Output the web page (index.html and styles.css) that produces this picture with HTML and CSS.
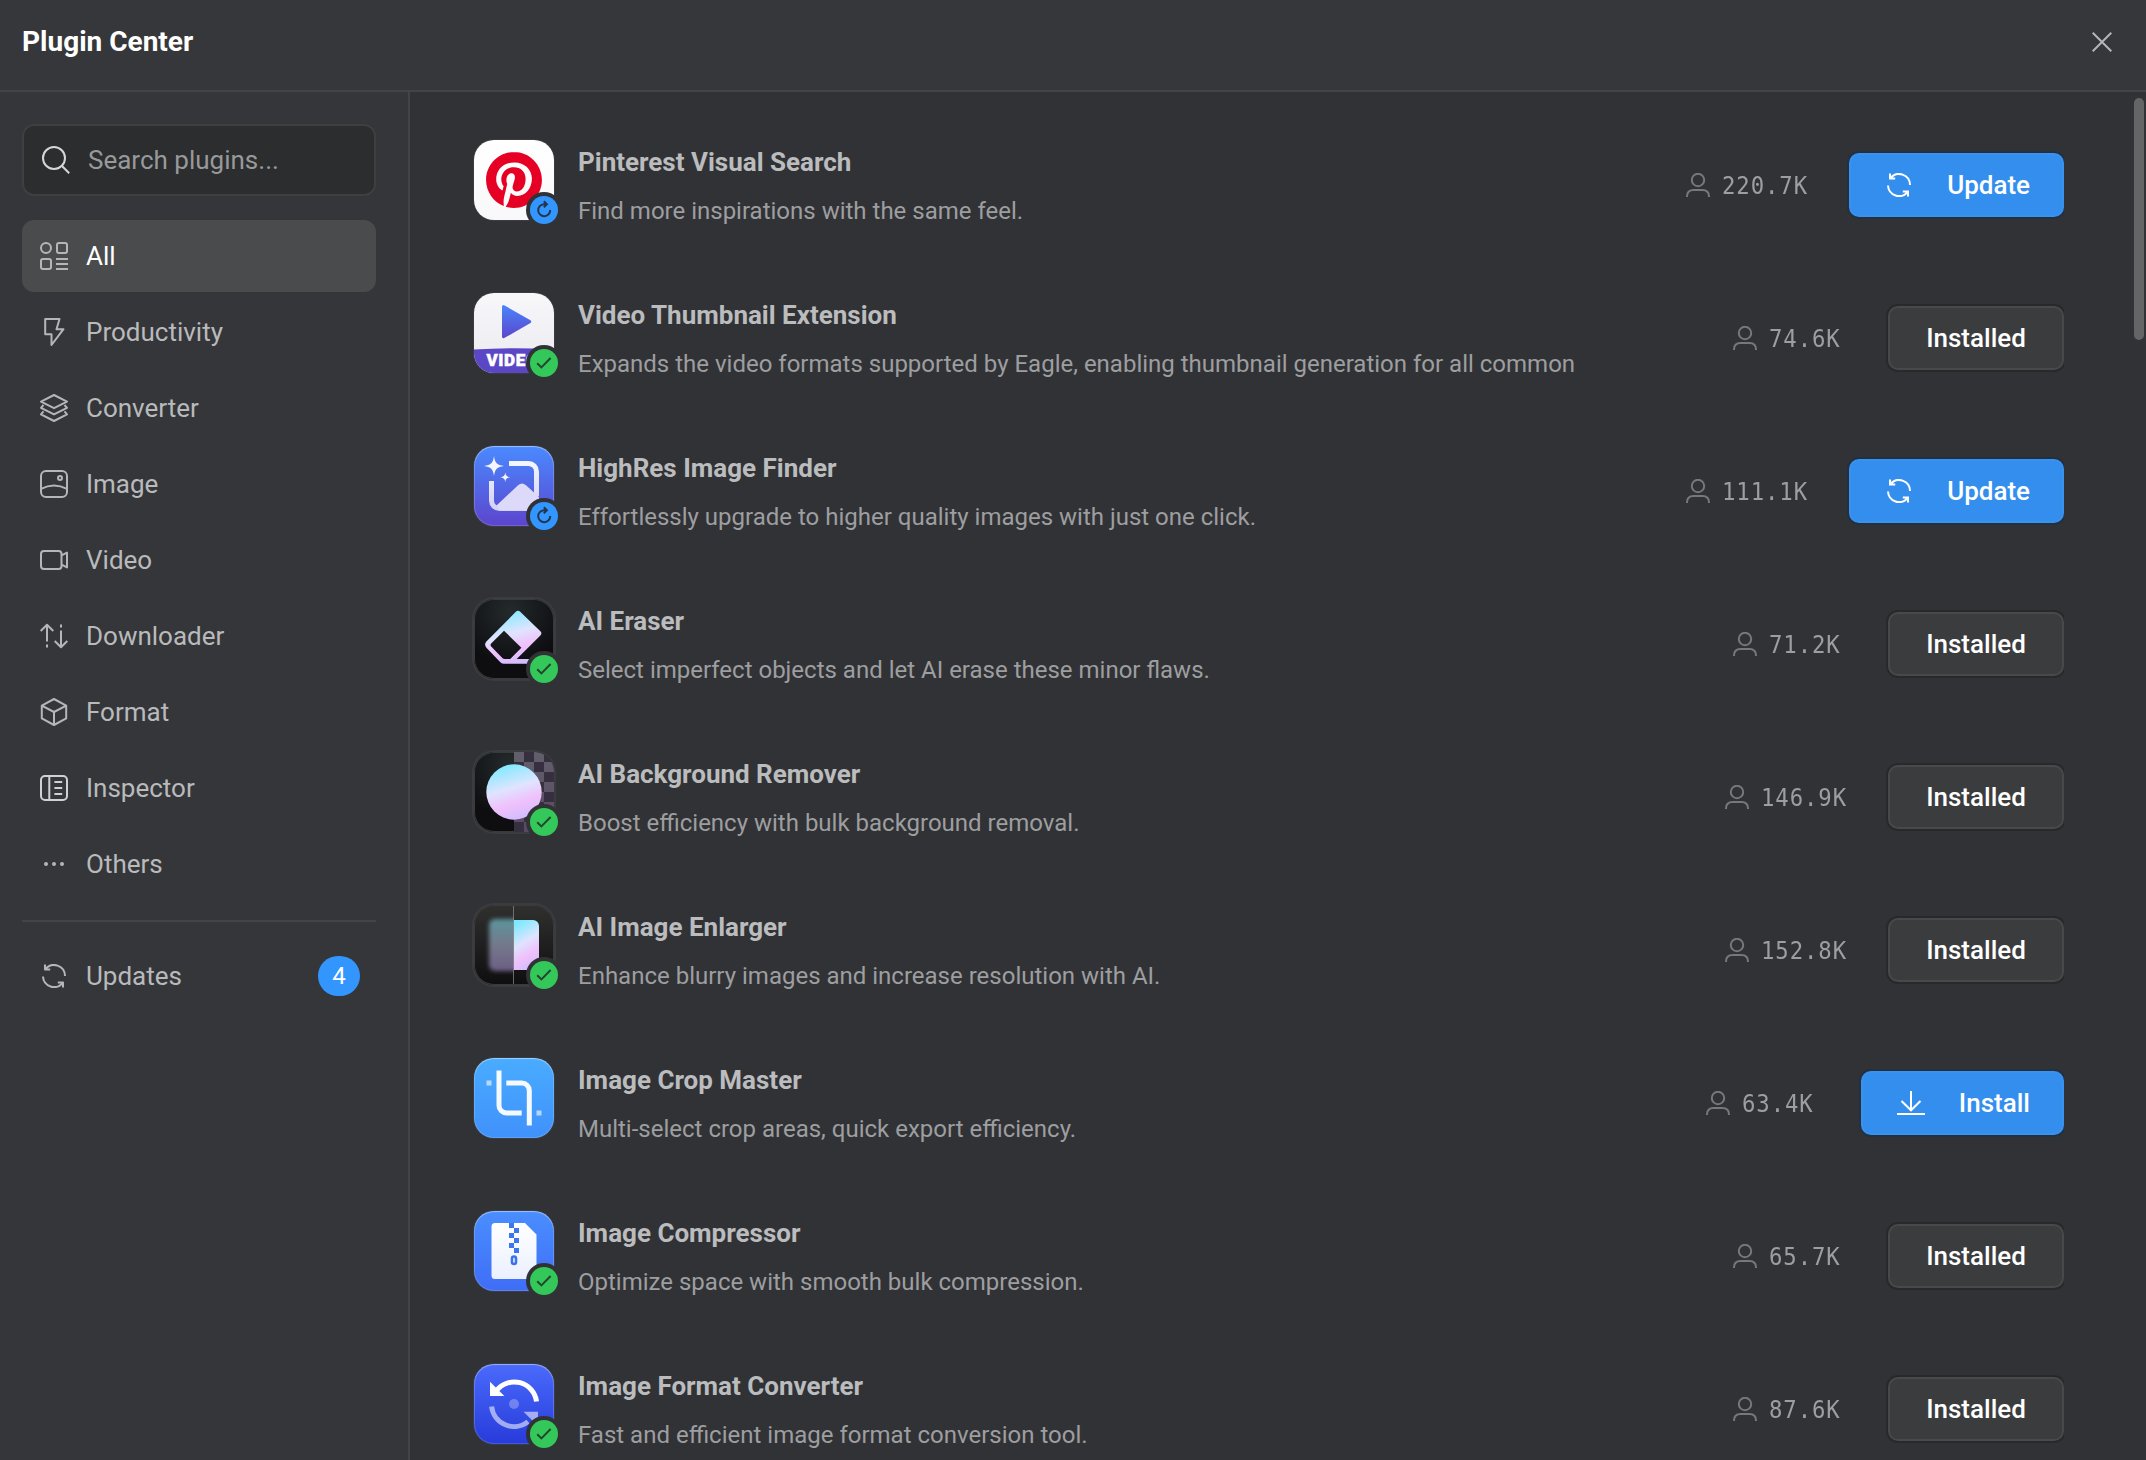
FILE: index.html
```html
<!DOCTYPE html>
<html lang="en">
<head>
<meta charset="utf-8">
<title>Plugin Center</title>
<link rel="stylesheet" href="styles.css">
</head>
<body>
<svg class="defs" aria-hidden="true">
  <defs>
    <linearGradient id="g-play" x1="0" y1="0" x2="0" y2="1"><stop offset="0" stop-color="#4a86fa"/><stop offset="1" stop-color="#5b45cc"/></linearGradient>
    <linearGradient id="g-frame" x1="0" y1="0" x2="0" y2="1"><stop offset="0" stop-color="#f3f5ff"/><stop offset="1" stop-color="#d3d1f5"/></linearGradient>
    <linearGradient id="g-holo" x1=".35" y1="0" x2=".65" y2="1"><stop offset="0" stop-color="#7eeaff"/><stop offset=".42" stop-color="#dfe4ff"/><stop offset=".7" stop-color="#f0c0fb"/><stop offset="1" stop-color="#cfbcff"/></linearGradient>
    <linearGradient id="g-blur" x1="0" y1="0" x2="0" y2="1"><stop offset="0" stop-color="#5c959d"/><stop offset=".5" stop-color="#74798a"/><stop offset="1" stop-color="#6d5f86"/></linearGradient>
    <linearGradient id="g-white" x1="0" y1="0" x2="0" y2="1"><stop offset="0" stop-color="#ffffff"/><stop offset="1" stop-color="#eaf0ff"/></linearGradient>
    <linearGradient id="g-check" x1="0" y1="0" x2="0" y2="1"><stop offset="0" stop-color="#625f6c"/><stop offset="1" stop-color="#5a4862"/></linearGradient>
    <filter id="f-soft" x="-30%" y="-30%" width="160%" height="160%"><feGaussianBlur stdDeviation="2.2"/></filter>
    <clipPath id="c-left"><path d="M0 0H40V80H0z"/></clipPath>
    <symbol id="i-sync" viewBox="0 0 24 24"><path d="M3.4 5.2A11 11 0 0 1 23 12M1 12.5A11 11 0 0 0 20.6 18.8M3 .4V5.6H8.2M21 23.6V18.4H15.8"/></symbol>
    <symbol id="i-user" viewBox="0 0 24 24"><circle cx="12" cy="7" r="6.2"/><path d="M1 24V23.5C1 19.5 3.5 17 7.5 17H16.5C20.5 17 23 19.5 23 23.5V24"/></symbol>
    <symbol id="i-download" viewBox="0 0 28 24"><path d="M14 0V18.5M4.5 10L14 19.3 23.5 10M0 23H28"/></symbol>
    <symbol id="i-check" viewBox="0 0 28 28"><path d="M7.2 14.2L11.4 18.4 20.6 9"/></symbol>
    <symbol id="i-reload" viewBox="0 0 28 28"><path d="M16 8.2H13.9A6 6 0 1 0 20.2 14M13.8 5.2L16.9 8.2 13.8 11.2"/></symbol>
  </defs>
</svg>

<header class="topbar">
  <h1 class="topbar-title">Plugin Center</h1>
  <svg class="close" viewBox="0 0 20 20"><path d="M.7 .7L19.3 19.3M19.3 .7L.7 19.3"/></svg>
</header>

<div class="body">
  <aside class="sidebar">
    <div class="search">
      <svg class="search-icon" viewBox="0 0 28 28"><circle cx="12" cy="12" r="11"/><path d="M20 20L27.2 27.2"/></svg>
      <span>Search plugins...</span>
    </div>
    <nav class="nav">
      <a class="nav-item active"><svg class="ic" viewBox="0 0 28 28"><circle cx="6" cy="6" r="5"/><rect x="17" y="1" width="10" height="10" rx="2"/><rect x="1" y="17" width="10" height="10" rx="2"/><path d="M16 17H28M16 22H28M16 27H28"/></svg><span>All</span></a>
      <a class="nav-item"><svg class="ic" viewBox="0 0 28 28"><path d="M5.5 1H19.5L16.5 11.2H23.5L11.5 27V16.3H5.2V1z"/></svg><span>Productivity</span></a>
      <a class="nav-item"><svg class="ic" viewBox="0 0 28 28"><path d="M14 1L27 7.6 14 14.2 1 7.6zM3.5 11L1 13.8 14 20.4 27 13.8 24.5 11M3.5 17.4L1 20.4 14 27 27 20.4 24.5 17.4"/></svg><span>Converter</span></a>
      <a class="nav-item"><svg class="ic" viewBox="0 0 28 28"><rect x="1" y="1" width="26" height="26" rx="5"/><circle cx="20" cy="8" r="2"/><path d="M1 18.8Q14 12 27 18.8"/></svg><span>Image</span></a>
      <a class="nav-item"><svg class="ic" viewBox="0 0 28 28"><rect x="1" y="5" width="20.5" height="18" rx="3"/><path d="M21.5 9.4L27 6.6V21.4L21.5 18.6"/></svg><span>Video</span></a>
      <a class="nav-item"><svg class="ic" viewBox="0 0 28 28"><path d="M7 3V19.5M7 22.5V25.5M.7 9L7 2.8 13.3 9M21 2.5V5.5M21 8.5V25M14.7 19L21 25.2 27.3 19"/></svg><span>Downloader</span></a>
      <a class="nav-item"><svg class="ic" viewBox="0 0 28 28"><path d="M14 1L26.2 7.6V20.4L14 27 1.8 20.4V7.6zM1.8 7.6L14 14 26.2 7.6M14 14V27"/></svg><span>Format</span></a>
      <a class="nav-item"><svg class="ic bright" viewBox="0 0 28 28"><rect x="1" y="2" width="26" height="24" rx="4"/><path d="M9.3 2V26M14.4 8H22.2M14.4 14H22.2M14.4 20H22.2"/></svg><span>Inspector</span></a>
      <a class="nav-item"><svg class="ic dots" viewBox="0 0 28 28"><circle cx="6" cy="14" r="2"/><circle cx="14" cy="14" r="2"/><circle cx="22" cy="14" r="2"/></svg><span>Others</span></a>
    </nav>
    <div class="updates">
      <a class="nav-item"><svg class="ic sync"><use href="#i-sync"/></svg><span>Updates</span><b class="count">4</b></a>
    </div>
  </aside>

  <main class="list">
    <article class="row">
      <div class="app pinterest">
        <svg viewBox="0 0 80 80"><g transform="translate(12 12) scale(2.3333)"><path fill="#e60023" d="M12.017 0C5.396 0 .029 5.367.029 11.987c0 5.079 3.158 9.417 7.618 11.162-.105-.949-.199-2.403.041-3.439.219-.937 1.406-5.957 1.406-5.957s-.359-.72-.359-1.781c0-1.663.967-2.911 2.168-2.911 1.024 0 1.518.769 1.518 1.688 0 1.029-.653 2.567-.992 3.992-.285 1.193.6 2.165 1.775 2.165 2.128 0 3.768-2.245 3.768-5.487 0-2.861-2.063-4.869-5.008-4.869-3.41 0-5.409 2.562-5.409 5.199 0 1.033.394 2.143.889 2.741.099.12.112.225.085.345-.09.375-.293 1.199-.334 1.363-.053.225-.172.271-.401.165-1.495-.69-2.433-2.878-2.433-4.646 0-3.776 2.748-7.252 7.92-7.252 4.158 0 7.392 2.967 7.392 6.923 0 4.135-2.607 7.462-6.233 7.462-1.214 0-2.354-.629-2.758-1.379l-.749 2.848c-.269 1.045-1.004 2.352-1.498 3.146 1.123.345 2.306.535 3.55.535 6.607 0 11.985-5.365 11.985-11.987C23.97 5.39 18.592.026 11.985.026z"/></g></svg>
        <i class="badge blue"><svg><use href="#i-reload"/></svg></i>
      </div>
      <div class="info"><h2>Pinterest Visual Search</h2><p>Find more inspirations with the same feel.</p></div>
      <div class="users"><svg><use href="#i-user"/></svg><span>220.7K</span></div>
      <button class="btn primary update"><svg><use href="#i-sync"/></svg>Update</button>
    </article>

    <article class="row">
      <div class="app video">
        <svg viewBox="0 0 80 80"><path fill="#5b46c6" d="M0 56.6Q40 54 80 56.6V80H0z"/><path fill="url(#g-play)" d="M28 14Q28 11 30.7 12.5L56 27Q58.6 28.7 56 30.3L30.7 44.8Q28 46.3 28 43.3z"/><text class="video-text" x="12.5" y="72.7">VIDEO</text></svg>
        <i class="badge green"><svg><use href="#i-check"/></svg></i>
      </div>
      <div class="info"><h2>Video Thumbnail Extension</h2><p>Expands the video formats supported by Eagle, enabling thumbnail generation for all common</p></div>
      <div class="users"><svg><use href="#i-user"/></svg><span>74.6K</span></div>
      <button class="btn">Installed</button>
    </article>

    <article class="row">
      <div class="app highres">
        <svg viewBox="0 0 80 80"><path fill="#f3f5ff" d="M20 10C21 17 23 19 30 20 23 21 21 23 20 30 19 23 17 21 10 20 17 19 19 17 20 10zM31.3 26.3C31.8 29.8 32.8 30.8 36.3 31.3 32.8 31.8 31.8 32.8 31.3 36.3 30.8 32.8 29.8 31.8 26.3 31.3 29.8 30.8 30.8 29.8 31.3 26.3z"/><path fill="none" stroke="url(#g-frame)" stroke-width="5" d="M35 17.5H54.5A8 8 0 0 1 62.5 25.5V50M17.5 35V54.5A8 8 0 0 0 25.5 62.5H56"/><path fill="#dcdaf8" d="M22.5 59.5L44 39.3Q48 35.6 52 39.3L65 51V64H26z"/></svg>
        <i class="badge blue"><svg><use href="#i-reload"/></svg></i>
      </div>
      <div class="info"><h2>HighRes Image Finder</h2><p>Effortlessly upgrade to higher quality images with just one click.</p></div>
      <div class="users"><svg><use href="#i-user"/></svg><span>111.1K</span></div>
      <button class="btn primary update"><svg><use href="#i-sync"/></svg>Update</button>
    </article>

    <article class="row">
      <div class="app dark eraser">
        <svg viewBox="0 0 80 80"><path fill="url(#g-holo)" fill-rule="evenodd" d="M41.8 12.8Q44 10.8 46.2 12.8L66.4 32.3Q68.4 34.3 66.4 36.5L42.7 60H64V64.8H30Q28 64.8 26.6 63.4L12.4 48.8Q9.8 45.6 12.4 42.4zM30 31.7L17.2 44.4Q15.8 46 17.2 47.6L28.6 59.2Q29.4 60 30.6 60H36.2L47.4 48.8z"/></svg>
        <i class="badge green"><svg><use href="#i-check"/></svg></i>
      </div>
      <div class="info"><h2>AI Eraser</h2><p>Select imperfect objects and let AI erase these minor flaws.</p></div>
      <div class="users"><svg><use href="#i-user"/></svg><span>71.2K</span></div>
      <button class="btn">Installed</button>
    </article>

    <article class="row">
      <div class="app dark remover">
        <svg viewBox="0 0 80 80"><path fill="#352f40" d="M40 0H80V80H40z"/><path fill="url(#g-check)" d="M40 0h10v10h-10zM60 0h10v10h-10zM50 10h10v10h-10zM70 10h10v10h-10zM60 20h10v10h-10zM70 30h10v10h-10zM60 40h10v10h-10zM70 50h10v10h-10zM40 60h10v10h-10zM50 70h10v10h-10z"/><circle cx="40" cy="40" r="27.7" fill="url(#g-holo)"/></svg>
        <i class="badge green"><svg><use href="#i-check"/></svg></i>
      </div>
      <div class="info"><h2>AI Background Remover</h2><p>Boost efficiency with bulk background removal.</p></div>
      <div class="users"><svg><use href="#i-user"/></svg><span>146.9K</span></div>
      <button class="btn">Installed</button>
    </article>

    <article class="row">
      <div class="app dark enlarger">
        <svg viewBox="0 0 80 80"><g clip-path="url(#c-left)"><rect x="15" y="14" width="40" height="52" rx="6" fill="url(#g-blur)" filter="url(#f-soft)"/></g><path fill="url(#g-holo)" d="M40 15H59A6 6 0 0 1 65 21V59A6 6 0 0 1 59 65H40z"/><path stroke="#8d8d90" stroke-width="1" stroke-opacity=".7" d="M39.5 1V79"/></svg>
        <i class="badge green"><svg><use href="#i-check"/></svg></i>
      </div>
      <div class="info"><h2>AI Image Enlarger</h2><p>Enhance blurry images and increase resolution with AI.</p></div>
      <div class="users"><svg><use href="#i-user"/></svg><span>152.8K</span></div>
      <button class="btn">Installed</button>
    </article>

    <article class="row">
      <div class="app crop">
        <svg viewBox="0 0 80 80"><path fill="none" stroke="#fff" stroke-opacity=".95" stroke-width="5" d="M25 12.5V47.5A7.5 7.5 0 0 0 32.5 55H47.7M32.3 25H47.8A7.5 7.5 0 0 1 55.3 32.5V67.5"/><path fill="#fff" fill-opacity=".6" d="M12.5 22.5h5v5h-5zM62.5 52.5h5v5h-5z"/></svg>
      </div>
      <div class="info"><h2>Image Crop Master</h2><p>Multi-select crop areas, quick export efficiency.</p></div>
      <div class="users"><svg><use href="#i-user"/></svg><span>63.4K</span></div>
      <button class="btn primary install"><svg><use href="#i-download"/></svg>Install</button>
    </article>

    <article class="row">
      <div class="app compressor">
        <svg viewBox="0 0 80 80"><path fill="url(#g-white)" d="M21 12H51L62.5 23.5V68H21A3.5 3.5 0 0 1 17.5 64.5V15.5A3.5 3.5 0 0 1 21 12z"/><path fill="#3d77ee" d="M35 12h5v5h-5zM40 17h5v5h-5zM35 22h5v5h-5zM40 27h5v5h-5zM35 32h5v5h-5zM40 37h5v5h-5z"/><rect x="38" y="45.5" width="4" height="7.5" rx="2" fill="#fff" stroke="#3d72ee" stroke-width="2.6"/></svg>
        <i class="badge green"><svg><use href="#i-check"/></svg></i>
      </div>
      <div class="info"><h2>Image Compressor</h2><p>Optimize space with smooth bulk compression.</p></div>
      <div class="users"><svg><use href="#i-user"/></svg><span>65.7K</span></div>
      <button class="btn">Installed</button>
    </article>

    <article class="row">
      <div class="app converter">
        <svg viewBox="0 0 80 80"><path fill="none" stroke="#fff" stroke-width="5" d="M22.5 26.5A22.5 22.5 0 0 1 62.5 37.5"/><path fill="#fff" d="M16 17.7V32H30.3z"/><g opacity=".55"><path fill="none" stroke="#fff" stroke-width="5" d="M17.6 42.5A22.5 22.5 0 0 0 54 57.6"/><path fill="#fff" d="M49.5 47.7H64V62z"/></g><circle cx="40" cy="40" r="5" fill="#fff" fill-opacity=".28"/></svg>
        <i class="badge green"><svg><use href="#i-check"/></svg></i>
      </div>
      <div class="info"><h2>Image Format Converter</h2><p>Fast and efficient image format conversion tool.</p></div>
      <div class="users"><svg><use href="#i-user"/></svg><span>87.6K</span></div>
      <button class="btn">Installed</button>
    </article>
  </main>
  <div class="scrollbar"><div class="thumb"></div></div>
</div>
</body>
</html>
```
FILE: styles.css
```css
* { box-sizing: border-box; }
html, body { height: 100%; }
body {
  margin: 0;
  display: flex;
  flex-direction: column;
  overflow: hidden;
  background: #353639;
  color: #b9babc;
  font-family: Roboto, "Liberation Sans", sans-serif;
  font-size: 26px;
}
svg { display: block; fill: none; stroke-width: 2; }
h1, h2, p { margin: 0; }
.defs { position: absolute; width: 0; height: 0; }

.topbar {
  flex: none;
  height: 92px;
  padding: 0 34px 8px 22px;
  border-bottom: 2px solid #434446;
  display: flex;
  align-items: center;
  justify-content: space-between;
  background: #36373a;
}
.topbar-title { font-size: 28px; font-weight: 700; color: #fff; }
.close { width: 20px; height: 20px; margin-top: 2px; stroke: #b4b5b8; }

.body { flex: 1; min-height: 0; display: flex; overflow: hidden; }

.sidebar {
  flex: none;
  width: 410px;
  padding: 32px 32px 0 22px;
  border-right: 2px solid #434446;
}
.search {
  height: 72px;
  margin-bottom: 24px;
  padding: 0 18px;
  display: flex;
  align-items: center;
  gap: 18px;
  border: 2px solid #3e3f41;
  border-radius: 12px;
  background: #2b2d2e;
  color: #98999b;
}
.search-icon { width: 28px; height: 28px; stroke: #d6d7d9; }
.nav { display: flex; flex-direction: column; gap: 4px; }
.nav-item {
  height: 72px;
  padding: 0 16px 0 18px;
  display: flex;
  align-items: center;
  gap: 18px;
  border-radius: 12px;
}
.nav-item.active { background: #4a4b4d; color: #fff; }
.ic { flex: none; width: 28px; height: 28px; stroke: #b5b6b9; stroke-linejoin: round; overflow: visible; }
.ic.bright { stroke: #d0d1d4; }
.ic.dots { fill: #b5b6b9; stroke: none; }
.ic.sync { width: 24px; height: 24px; margin: 0 2px; }
.updates { margin-top: 20px; padding-top: 18px; border-top: 2px solid #434446; }
.count {
  width: 42px;
  height: 40px;
  margin-left: auto;
  border-radius: 20px;
  background: #3396ff;
  color: #fff;
  font-size: 24px;
  font-weight: 400;
  line-height: 40px;
  text-align: center;
}

.list { flex: 1; min-width: 0; padding: 45px 0 0 64px; background: #313235; }
.row { height: 153px; display: flex; align-items: flex-start; }
.app {
  position: relative;
  flex: none;
  width: 80px;
  height: 80px;
  margin-top: 3px;
  border-radius: 20px;
  box-shadow: 0 0 0 1px #3b3c3f;
}
.app > svg { width: 80px; height: 80px; border-radius: 20px; overflow: hidden; }
.pinterest { background: linear-gradient(#fff, #f8f8fa); }
.video { background: linear-gradient(#f8f8fb, #e9e9ef); }
.video-text { fill: #fff; stroke: #fff; stroke-width: .5; font-size: 17px; font-weight: 900; letter-spacing: .6px; }
.highres { background: linear-gradient(#4a8aff, #5c45cd); }
.dark { background: radial-gradient(circle at 45% 15%, #242a2c, #0e0e11 65%); box-shadow: 0 0 0 2px #3b3c3f, inset 0 0 0 1px #3a3a3d; }
.enlarger { background: linear-gradient(#30302f, #0e0e0f); }
.crop { background: linear-gradient(#49acff, #4091fb); }
.compressor { background: linear-gradient(#4a8eff, #3f6df6); }
.converter { background: linear-gradient(#4a6bfc, #273bda); }
.highres, .crop, .compressor, .converter { box-shadow: 0 0 0 1px #3b3c3f, inset 0 1px 1px rgba(255, 255, 255, .35), inset 0 0 0 1px rgba(255, 255, 255, .15); }
.badge {
  position: absolute;
  left: 52px;
  top: 52px;
  width: 36px;
  height: 36px;
  padding: 4px;
  border-radius: 50%;
  background: #313235;
}
.badge svg { width: 28px; height: 28px; border-radius: 50%; }
.badge.blue svg { background: #3396ff; stroke: #22364d; }
.badge.green svg { background: #34c759; stroke: #24462f; }

.info { flex: 1; min-width: 0; padding-left: 24px; white-space: nowrap; overflow: hidden; }
.info h2 { font-size: 26px; font-weight: 700; line-height: 50px; color: #bbbcbe; }
.info p { font-size: 24px; line-height: 48px; color: #9d9ea0; }

.users {
  flex: none;
  width: 203px;
  height: 96px;
  display: flex;
  align-items: center;
  justify-content: center;
  gap: 12px;
  color: #9d9ea0;
  font: 24.5px "DejaVu Sans Mono", "Liberation Mono", monospace;
}
.users span { letter-spacing: 1px; transform: scaleX(.91); transform-origin: left; margin-right: -8px; }
.users svg { flex: none; width: 24px; height: 24px; stroke: #77787b; }

.btn {
  flex: none;
  width: 176px;
  height: 64px;
  margin: 16px 0;
  padding: 0;
  border: 2px solid #48494b;
  border-radius: 10px;
  background: #3b3c3e;
  box-shadow: 0 0 0 2px #29292c;
  color: #fff;
  font: 500 26px Roboto, "Liberation Sans", sans-serif;
}
.btn.primary {
  display: flex;
  align-items: center;
  justify-content: space-between;
  padding: 0 32px 0 36px;
  border-color: #3a92ef;
  background: #348eee;
  box-shadow: 0 0 0 2px #22303f;
}
.btn svg { width: 24px; height: 24px; stroke: #fff; }
.btn.update { width: 215px; }
.btn.install { width: 203px; padding-left: 34px; }
.btn.install svg { width: 28px; }

.scrollbar { flex: none; width: 82px; padding: 6px 2px 0 0; background: #313235; }
.thumb { width: 10px; height: 242px; margin-left: auto; border-radius: 5px; background: #646567; }
```
